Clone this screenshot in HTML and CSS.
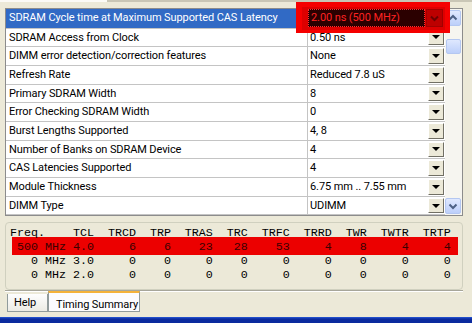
FILE: index.html
```html
<!DOCTYPE html>
<html lang="en">
<head>
    <meta charset="UTF-8">
    <title>SPD Timing</title>
    <link rel="stylesheet" href="styles.css">
</head>
<body>
    <div class="topbar"></div>

    <div class="grid">
        <div class="rows">
            <div class="row selected"><div class="name">SDRAM Cycle time at Maximum Supported CAS Latency</div><div class="value">2.00 ns (500 MHz)</div><div class="drop"></div></div>
            <div class="row"><div class="name">SDRAM Access from Clock</div><div class="value">0.50 ns</div><div class="drop"></div></div>
            <div class="row"><div class="name">DIMM error detection/correction features</div><div class="value">None</div><div class="drop"></div></div>
            <div class="row"><div class="name">Refresh Rate</div><div class="value">Reduced 7.8 uS</div><div class="drop"></div></div>
            <div class="row"><div class="name">Primary SDRAM Width</div><div class="value">8</div><div class="drop"></div></div>
            <div class="row"><div class="name">Error Checking SDRAM Width</div><div class="value">0</div><div class="drop"></div></div>
            <div class="row"><div class="name">Burst Lengths Supported</div><div class="value">4, 8</div><div class="drop"></div></div>
            <div class="row"><div class="name">Number of Banks on SDRAM Device</div><div class="value">4</div><div class="drop"></div></div>
            <div class="row"><div class="name">CAS Latencies Supported</div><div class="value">4</div><div class="drop"></div></div>
            <div class="row"><div class="name">Module Thickness</div><div class="value">6.75 mm .. 7.55 mm</div><div class="drop"></div></div>
            <div class="row"><div class="name">DIMM Type</div><div class="value">UDIMM</div><div class="drop"></div></div>
        </div>
        <div class="vscroll">
            <div class="sbtn"><svg width="14" height="14" viewBox="0 0 14 14"><polyline points="3.5,8.5 7,5 10.5,8.5" fill="none" stroke="#4d6185" stroke-width="2"/></svg></div>
            <div class="thumb"></div>
            <div class="track"></div>
            <div class="sbtn"><svg width="14" height="14" viewBox="0 0 14 14"><polyline points="3.5,5.5 7,9 10.5,5.5" fill="none" stroke="#4d6185" stroke-width="2"/></svg></div>
        </div>
    </div>

    <div class="timing">
        <div class="line">Freq.    TCL  TRCD  TRP  TRAS  TRC  TRFC  TRRD  TWR  TWTR  TRTP</div>
        <div class="line hot"> 500 MHz 4.0     6    6    23   28    53     4    8     4     4</div>
        <div class="line">   0 MHz 3.0     0    0     0    0     0     0    0     0     0</div>
        <div class="line">   0 MHz 2.0     0    0     0    0     0     0    0     0     0</div>
    </div>

    <div class="tabs">
        <div class="tab">Help</div>
        <div class="tab active">Timing Summary</div>
    </div>

    <div class="frame"></div>

    <div class="mark">
        <div class="mark-in">
            <div class="mark-cell">2.00 ns (500 MHz)</div>
            <div class="mark-btn"><svg width="15" height="14" viewBox="0 0 15 14"><polyline points="4,5.5 7.5,9 11,5.5" fill="none" stroke="#6e0000" stroke-width="2"/></svg></div>
        </div>
    </div>
</body>
</html>
```

FILE: styles.css
```css
body {
    margin: 0;
    width: 472px;
    height: 323px;
    overflow: hidden;
    position: relative;
    background: #ece9d8;
    font-family: Roboto, "DejaVu Sans", sans-serif;
    font-size: 11px;
    letter-spacing: -0.1px;
    color: #000;
}

.topbar {
    height: 8px;
    background: linear-gradient(to right, #fbfaf6 107px, #c9c6b6 107px) top left / 100% 2px no-repeat;
}

/* property grid */
.grid {
    display: flex;
    margin-left: 5px;
    width: 458px;
    height: 208px;
    box-sizing: border-box;
    border: 1px solid #8c8c8c;
    background: #fff;
}

.rows {
    flex: 1;
    overflow: hidden;
}

.row {
    display: flex;
    height: 18.7px;
    box-sizing: border-box;
    border-bottom: 1px solid #c4c4c4;
    line-height: 17.7px;
}

.row.selected {
    height: 19.5px;
    line-height: 18.5px;
}

.name {
    width: 302px;
    box-sizing: border-box;
    padding-left: 3px;
    border-right: 1px solid #c4c4c4;
    white-space: nowrap;
    overflow: hidden;
}

.selected .name {
    background: #316ac5;
    color: #fff;
}

.value {
    flex: 1;
    padding-left: 2px;
    white-space: nowrap;
}

.drop {
    width: 16px;
    margin: 1px 1px 1px 0;
    box-sizing: border-box;
    border: 1px solid;
    border-color: #fff #716f64 #716f64 #fff;
    background: #ece9d8;
    display: flex;
    align-items: center;
    justify-content: center;
}

.drop::before {
    content: "";
    border-top: 4px solid #000;
    border-left: 4px solid transparent;
    border-right: 4px solid transparent;
}

/* scrollbar */
.vscroll {
    width: 17px;
    display: flex;
    flex-direction: column;
    background: #f6f5f0;
}

.sbtn, .thumb {
    width: 16px;
    box-sizing: border-box;
    border: 1px solid #b4c7f1;
    border-radius: 2px;
    background: linear-gradient(#dfe8fe, #bccffa);
}

.sbtn {
    height: 16px;
    margin: 1px 0;
    display: flex;
    align-items: center;
    justify-content: center;
}

.sbtn svg {
    display: block;
}

.thumb {
    height: 15px;
    margin-top: 12px;
    margin-left: 1px;
    width: 15px;
}

.track {
    flex: 1;
}

/* timing summary */
.timing {
    margin: 6px 0 0 5px;
    width: 458px;
    height: 68px;
    box-sizing: border-box;
    padding: 3px 0 0 4px;
    border: 1px solid #d0d0bf;
    border-radius: 4px;
    font-family: "Liberation Mono", monospace;
    font-size: 11.667px;
    letter-spacing: 0;
    line-height: 14px;
}

.line {
    white-space: pre;
}

.line.hot {
    background: #ec0000;
    color: #3a0000;
    margin: -3px 4px -1px 2px;
    padding: 3px 0 1px;
    text-indent: -2px;
}

/* tabs */
.tabs {
    display: flex;
    align-items: flex-end;
    margin-left: 5px;
    width: 458px;
    height: 22px;
    padding-left: 2px;
    box-sizing: border-box;
    border-top: 1px solid #a7a69a;
    box-shadow: inset 0 1px #fff;
}

.tab {
    box-sizing: border-box;
    height: 18px;
    padding: 2px 0 0 6px;
    width: 41px;
    white-space: nowrap;
    border: 1px solid #919b9c;
    border-top: none;
    background: linear-gradient(#fefefe, #ecebe5);
}

.tab.active {
    width: 92px;
    height: 21px;
    padding: 5px 0 0 7px;
    border-top: 2px solid #f4b23a;
    background: #fcfcfe;
}

.frame {
    margin-top: 5px;
    height: 6px;
    background: linear-gradient(#2a5ad8, #0b2a9e 2px);
}

/* red annotation over the first value */
.mark {
    position: absolute;
    left: 296px;
    top: 2px;
    width: 154px;
    height: 31px;
    box-sizing: border-box;
    padding: 5px 5px 3px 6px;
    background: #f50000;
}

.mark-in {
    display: flex;
    height: 23px;
    box-sizing: border-box;
    padding: 2px 2px 3px 6px;
    background: #dd0000;
}

.mark-cell {
    width: 117px;
    box-sizing: border-box;
    padding-left: 2px;
    line-height: 16px;
    border: 1px dotted #ff3030;
    background: #2b0000;
    color: #ff2222;
    white-space: nowrap;
}

.mark-btn {
    width: 17px;
    margin-left: 1px;
    box-sizing: border-box;
    border: 1px solid #a30000;
    background: #bd0000;
    display: flex;
    align-items: center;
    justify-content: center;
}
```
